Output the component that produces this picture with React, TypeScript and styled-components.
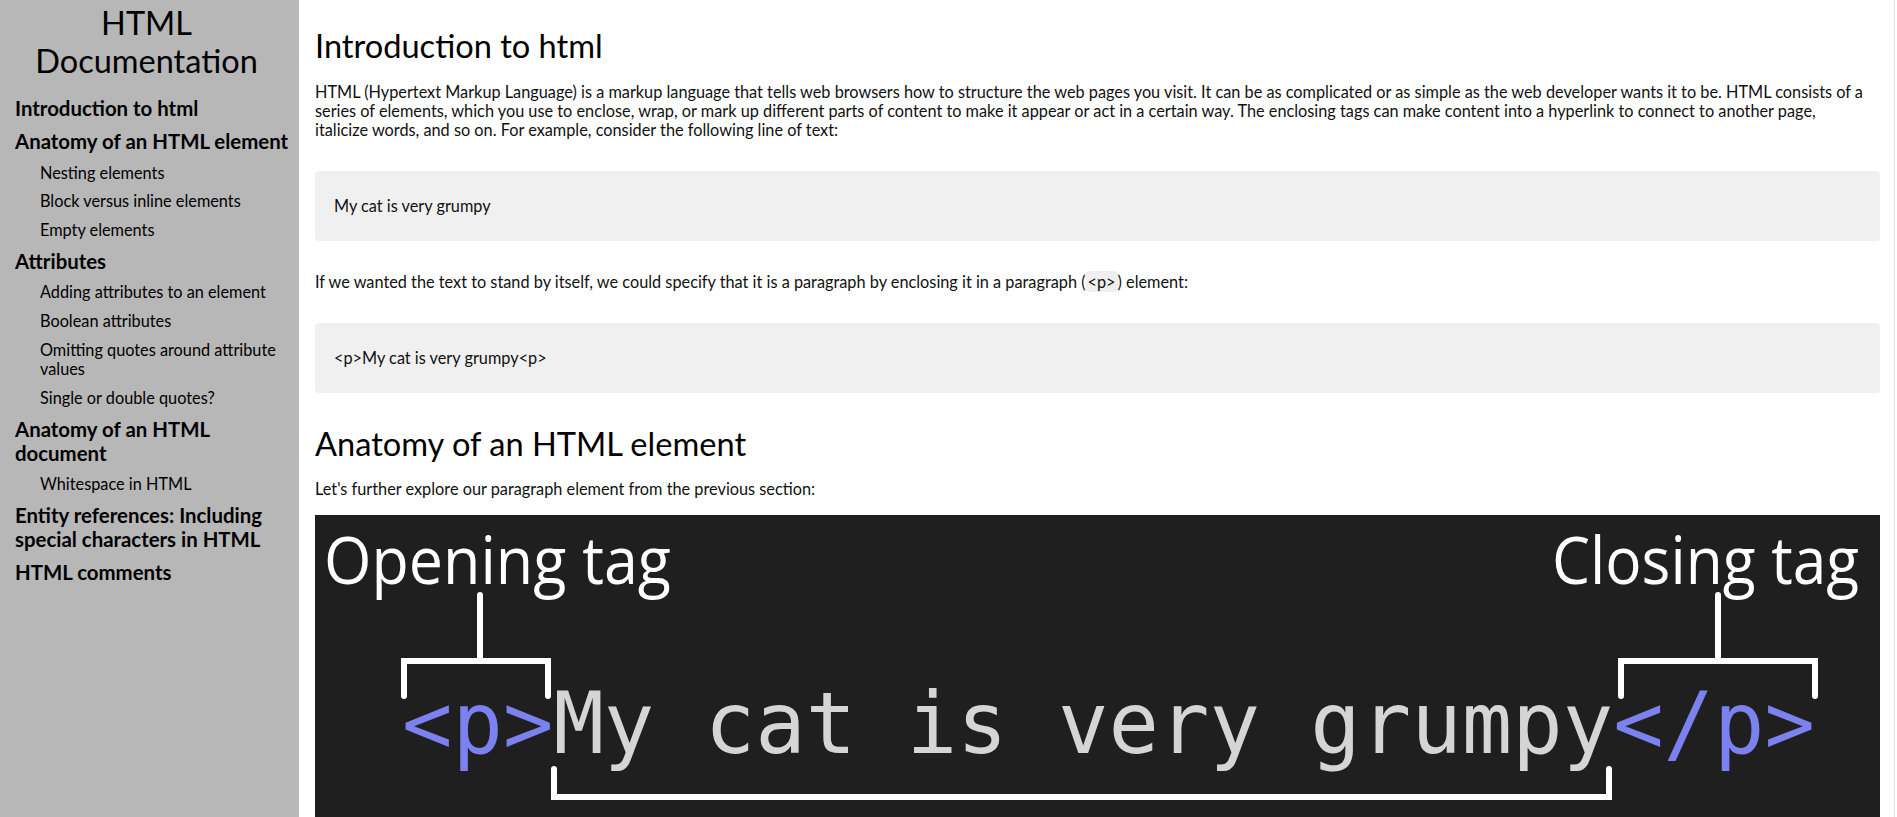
import React from "react";
import styled, { createGlobalStyle } from "styled-components";

const GlobalStyle = createGlobalStyle`
  * { box-sizing: border-box; }
  html, body { margin: 0; padding: 0; background: #ffffff; }
  body {
    font-family: "Lato", "Inter", "Noto Sans", sans-serif;
    color: #111111;
  }
`;

const Layout = styled.div`
  display: grid;
  grid-template-columns: 299px 1fr;
  min-height: 100vh;
`;

const Sidebar = styled.nav`
  position: sticky;
  top: 0;
  height: 100vh;
  background: #b7b7b7;
  padding: 4px 6px 0 15px;
  overflow: hidden;
`;

const SidebarTitle = styled.h1`
  margin: 0 0 17px -15px;
  font-size: 32.5px;
  font-weight: 400;
  line-height: 37.5px;
  text-align: center;
  color: #000000;
`;

const NavList = styled.ul`
  list-style: none;
  margin: 0;
  padding: 0;
  display: flex;
  flex-direction: column;
  gap: 9.3px;
`;

const NavItem = styled.li<{ $sub?: boolean }>`
  padding-left: ${(p) => (p.$sub ? "25px" : "0")};
  font-size: ${(p) => (p.$sub ? "16.3px" : "20.4px")};
  font-weight: ${(p) => (p.$sub ? 400 : 700)};
  line-height: ${(p) => (p.$sub ? "19.5px" : "24px")};
`;

const NavLink = styled.a`
  color: #000000;
  text-decoration: none;
`;

const Main = styled.main`
  display: block;
  padding: 1px 14px 40px 16px;
  margin-right: 2px;
  border-right: 1px solid #e4e4e4;
  min-width: 0;
`;

const SectionTitle = styled.h2<{ $first?: boolean }>`
  margin: ${(p) => (p.$first ? "26px" : "31px")} 0 0;
  font-size: 32.6px;
  font-weight: 400;
  line-height: 38.4px;
  color: #000000;
`;

const Paragraph = styled.p`
  margin: 16.3px 0 0;
  font-size: 16.3px;
  line-height: 19.2px;
`;

const CodeBlock = styled.div`
  margin: 31.5px 0;
  padding: 25px 19px;
  background: #f0f0f0;
  border-radius: 4px;
  font-size: 16.3px;
  line-height: 20px;
`;

const InlineCode = styled.code`
  font-family: inherit;
  font-size: inherit;
  background: #efefef;
  border-radius: 4px;
  padding: 1px 2px;
`;

const Figure = styled.figure`
  margin: 17px 0 0;
  background: #201f1f;
  line-height: 0;
`;

const Diagram = styled.svg`
  display: block;
  width: 100%;
  height: auto;
`;

const nav: { label: string; sub?: boolean }[] = [
  { label: "Introduction to html" },
  { label: "Anatomy of an HTML element" },
  { label: "Nesting elements", sub: true },
  { label: "Block versus inline elements", sub: true },
  { label: "Empty elements", sub: true },
  { label: "Attributes" },
  { label: "Adding attributes to an element", sub: true },
  { label: "Boolean attributes", sub: true },
  { label: "Omitting quotes around attribute values", sub: true },
  { label: "Single or double quotes?", sub: true },
  { label: "Anatomy of an HTML document" },
  { label: "Whitespace in HTML", sub: true },
  { label: "Entity references: Including special characters in HTML" },
  { label: "HTML comments" },
];

function AnatomyDiagram() {
  const tag = "#7b81ee";
  const text = "#d5d5d5";
  return (
    <Diagram viewBox="0 0 1565 340" aria-label="Anatomy of an HTML element">
      <text
        x="9"
        y="69"
        fontFamily="'Open Sans', sans-serif"
        fontSize="66"
        fill="#ffffff"
        textLength="347"
        lengthAdjust="spacingAndGlyphs"
      >
        Opening tag
      </text>
      <text
        x="1237"
        y="69"
        fontFamily="'Open Sans', sans-serif"
        fontSize="66"
        fill="#ffffff"
        textLength="307"
        lengthAdjust="spacingAndGlyphs"
      >
        Closing tag
      </text>
      <g fill="none" stroke="#ffffff" strokeWidth="6" strokeLinecap="round" strokeLinejoin="miter">
        <path d="M165 80 V146" />
        <path d="M89 181 V146 H233 V181" />
        <path d="M1403 80 V146" />
        <path d="M1306 181 V146 H1500 V181" />
        <path d="M239 254 V282 H1294 V254" />
      </g>
      <text
        x="87"
        y="238"
        fontFamily="'DejaVu Sans Mono', monospace"
        fontSize="86"
        textLength="1413"
        lengthAdjust="spacingAndGlyphs"
      >
        <tspan fill={tag}>&lt;p&gt;</tspan>
        <tspan fill={text}>My cat is very grumpy</tspan>
        <tspan fill={tag}>&lt;/p&gt;</tspan>
      </text>
    </Diagram>
  );
}

export default function App() {
  return (
    <>
      <GlobalStyle />
      <Layout>
        <Sidebar>
          <SidebarTitle>HTML Documentation</SidebarTitle>
          <NavList>
            {nav.map((n) => (
              <NavItem key={n.label} $sub={n.sub}>
                <NavLink href="#">{n.label}</NavLink>
              </NavItem>
            ))}
          </NavList>
        </Sidebar>
        <Main>
          <SectionTitle $first>Introduction to html</SectionTitle>
          <Paragraph>
            HTML (Hypertext Markup Language) is a markup language that tells web browsers how to structure the web
            pages you visit. It can be as complicated or as simple as the web developer wants it to be. HTML consists of
            a series of elements, which you use to enclose, wrap, or mark up different parts of content to make it
            appear or act in a certain way. The enclosing tags can make content into a hyperlink to connect to another
            page,
            <br />
            italicize words, and so on. For example, consider the following line of text:
          </Paragraph>
          <CodeBlock>My cat is very grumpy</CodeBlock>
          <Paragraph>
            If we wanted the text to stand by itself, we could specify that it is a paragraph by enclosing it in a
            paragraph (<InlineCode>&lt;p&gt;</InlineCode>) element:
          </Paragraph>
          <CodeBlock>&lt;p&gt;My cat is very grumpy&lt;p&gt;</CodeBlock>
          <SectionTitle>Anatomy of an HTML element</SectionTitle>
          <Paragraph>Let's further explore our paragraph element from the previous section:</Paragraph>
          <Figure>
            <AnatomyDiagram />
          </Figure>
        </Main>
      </Layout>
    </>
  );
}
